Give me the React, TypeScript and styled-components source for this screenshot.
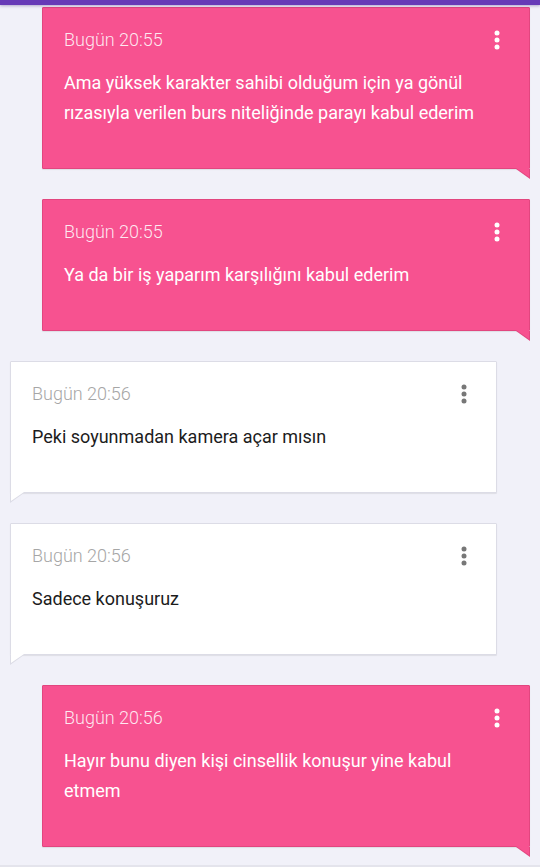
import React from 'react';
import styled, { createGlobalStyle } from 'styled-components';

const GlobalStyle = createGlobalStyle`
  html, body {
    margin: 0;
    padding: 0;
    background: #f1f1f9;
    font-family: Roboto, "Noto Sans", "Liberation Sans", sans-serif;
  }
`;

type Side = 'me' | 'them';

type Message = {
  id: number;
  side: Side;
  time: string;
  text: string;
};

const messages: Message[] = [
  { id: 1, side: 'me', time: 'Bugün 20:55', text: 'Ama yüksek karakter sahibi olduğum için ya gönül rızasıyla verilen burs niteliğinde parayı kabul ederim' },
  { id: 2, side: 'me', time: 'Bugün 20:55', text: 'Ya da bir iş yaparım karşılığını kabul ederim' },
  { id: 3, side: 'them', time: 'Bugün 20:56', text: 'Peki soyunmadan kamera açar mısın' },
  { id: 4, side: 'them', time: 'Bugün 20:56', text: 'Sadece konuşuruz' },
  { id: 5, side: 'me', time: 'Bugün 20:56', text: 'Hayır bunu diyen kişi cinsellik konuşur yine kabul etmem' },
];

const Page = styled.div`
  min-height: 867px;
  display: flex;
  flex-direction: column;
`;

const TopBar = styled.div`
  height: 5px;
  background: #673ab7;
  box-shadow: 0 1px 3px rgba(60, 30, 120, 0.35);
  position: relative;
  z-index: 2;
`;

const List = styled.div`
  display: flex;
  flex-direction: column;
  gap: 30px;
  padding: 2px 0 17px;
`;

const Bubble = styled.div<{ $side: Side }>`
  position: relative;
  margin: ${(p) => (p.$side === 'me' ? '0 10px 0 42px' : '0 43px 0 10px')};
  padding: 20px 22px 40px 21px;
  background: ${(p) => (p.$side === 'me' ? '#f75290' : '#ffffff')};
  border: 1px solid ${(p) => (p.$side === 'me' ? '#e2467f' : '#dcdce6')};
  border-radius: 1px;
  box-shadow: 0 1px 1px rgba(0, 0, 0, 0.08);

  &::after {
    content: '';
    position: absolute;
    bottom: -11px;
    width: 14px;
    height: 10px;
    background: ${(p) => (p.$side === 'me' ? '#e2467f' : '#dcdce6')};
    ${(p) =>
      p.$side === 'me'
        ? 'right: -1px; clip-path: polygon(0 0, 100% 0, 100% 100%);'
        : 'left: -1px; clip-path: polygon(0 0, 100% 0, 0 100%);'}
  }

  &::before {
    content: '';
    position: absolute;
    bottom: -10px;
    width: 13px;
    height: 10px;
    z-index: 1;
    background: ${(p) => (p.$side === 'me' ? '#f75290' : '#ffffff')};
    ${(p) =>
      p.$side === 'me'
        ? 'right: 0; clip-path: polygon(0 0, 100% 0, 100% 90%);'
        : 'left: 0; clip-path: polygon(0 0, 100% 0, 0 90%);'}
  }
`;

const Header = styled.div`
  display: flex;
  align-items: center;
  justify-content: space-between;
  height: 24px;
`;

const Time = styled.span<{ $side: Side }>`
  font-size: 18px;
  font-weight: 300;
  line-height: 24px;
  color: ${(p) => (p.$side === 'me' ? 'rgba(255, 255, 255, 0.88)' : '#a6a6a6')};
`;

const MenuButton = styled.button<{ $side: Side }>`
  width: 20px;
  height: 24px;
  padding: 0;
  border: 0;
  background: none;
  display: flex;
  color: ${(p) => (p.$side === 'me' ? '#ffffff' : '#777777')};
`;

const Text = styled.p<{ $side: Side }>`
  margin: 16px 24px 0 0;
  font-size: 18px;
  line-height: 30px;
  color: ${(p) => (p.$side === 'me' ? '#ffffff' : '#1c1c1c')};
`;

const Footer = styled.div`
  margin-top: auto;
  height: 2px;
  background: #e4e4ec;
`;

const Dots = () => (
  <svg width="20" height="24" viewBox="0 0 20 24" fill="currentColor">
    <circle cx="10" cy="5" r="2.5" />
    <circle cx="10" cy="12" r="2.5" />
    <circle cx="10" cy="19" r="2.5" />
  </svg>
);

const App = () => {
  return (
    <Page>
      <GlobalStyle />
      <TopBar />
      <List>
        {messages.map((m) => (
          <Bubble key={m.id} $side={m.side}>
            <Header>
              <Time $side={m.side}>{m.time}</Time>
              <MenuButton $side={m.side} aria-label="Menü">
                <Dots />
              </MenuButton>
            </Header>
            <Text $side={m.side}>{m.text}</Text>
          </Bubble>
        ))}
      </List>
      <Footer />
    </Page>
  );
};

export default App;
